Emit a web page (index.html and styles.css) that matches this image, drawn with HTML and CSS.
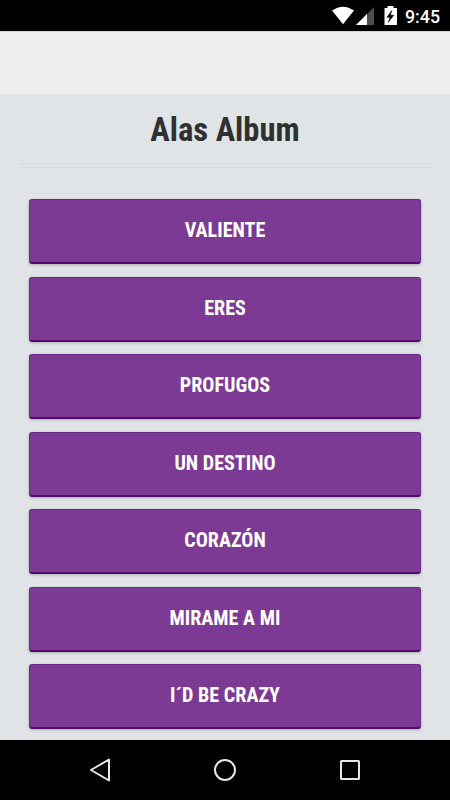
FILE: index.html
```html
<!DOCTYPE html>
<html lang="es">
<head>
<meta charset="utf-8">
<meta name="viewport" content="width=device-width, initial-scale=1">
<title>Alas Album</title>
<link rel="stylesheet" href="styles.css">
</head>
<body>
<div class="statusbar">
	<svg class="status-icons" width="80" height="31" viewBox="0 0 80 31">
		<path d="M2 10.500Q13 2.800 24 10.500L13 24.300Z" fill="#fff"/>
		<path d="M44 7V25H26Z" fill="#4d4d4d"/>
		<path d="M37 14V25H26Z" fill="#fff"/>
		<path d="M57.500 6h6v2h3.500v17h-12.500v-17h3z" fill="#fff"/>
		<path d="M61.800 10.500L57 17.300h3.200L58.200 22.300L63.700 15.300h-3.400z" fill="#000" stroke="#000" stroke-width=".6"/>
	</svg>
	<span class="clock">9:45</span>
</div>
<div class="header"></div>
<div class="content">
	<h1>Alas Album</h1>
	<div class="divider"></div>
	<div class="songs">
		<button class="btn">Valiente</button>
		<button class="btn">Eres</button>
		<button class="btn">Profugos</button>
		<button class="btn">Un Destino</button>
		<button class="btn">Corazón</button>
		<button class="btn">Mirame a mi</button>
		<button class="btn">I´d be crazy</button>
	</div>
</div>
<div class="navbar">
	<svg width="24" height="26" viewBox="0 0 24 26"><path d="M21 2.500V23.500L3 13Z"/></svg>
	<svg width="24" height="26" viewBox="0 0 24 26"><circle cx="12" cy="13" r="10"/></svg>
	<svg width="24" height="26" viewBox="0 0 24 26"><rect x="3" y="4" width="18" height="18" rx=".5"/></svg>
</div>
</body>
</html>
```

FILE: styles.css
```css
* {
	box-sizing: border-box;
}
body {
	margin: 0;
	height: 800px;
	display: flex;
	flex-direction: column;
	overflow: hidden;
	background-color: #e0e4e7;
	font-family: "Roboto Condensed", Roboto, sans-serif;
	font-stretch: 75%;
}
.statusbar {
	height: 31px;
	flex: none;
	display: flex;
	justify-content: flex-end;
	align-items: center;
	padding-right: 10px;
	background-color: #000;
	color: #fff;
}
.status-icons {
	margin-right: -11px;
}
.clock {
	width: 41px;
	text-align: right;
	font-family: Roboto, sans-serif;
	font-stretch: normal;
	font-size: 17.8px;
	font-weight: 500;
	line-height: 31px;
	padding-top: 1px;
}
.header {
	height: 63px;
	flex: none;
	background-color: #ededed;
	border-top: 1px solid #d4d4d4;
}
.content {
	flex: 1;
	min-height: 0;
	padding: 16px 18.5px 0;
}
h1 {
	margin: 0;
	font-size: 32.6px;
	line-height: 40px;
	font-weight: 700;
	text-align: center;
	color: #303030;
}
.divider {
	height: 5px;
	margin: 13px 0 31px;
	border-top: 1px solid #d9dbdc;
	border-bottom: 1px solid #d9dbdc;
}
.songs {
	display: flex;
	flex-direction: column;
	gap: 12.5px;
	padding: 0 10.5px;
}
.btn {
	height: 65px;
	padding: 0 0 2px;
	border: 1px solid #6d2586;
	border-bottom: 2px solid #530b6a;
	border-radius: 3px;
	background-color: #7d3a94;
	box-shadow: 0 1px 3px rgba(0, 0, 0, .25);
	color: #fff;
	font: inherit;
	font-size: 20.1px;
	font-weight: 700;
	text-transform: uppercase;
}
.navbar {
	height: 60px;
	flex: none;
	display: flex;
	justify-content: center;
	align-items: center;
	gap: 101px;
	background-color: #000;
}
.navbar svg {
	fill: none;
	stroke: #e6e6e6;
	stroke-width: 2;
	stroke-linejoin: round;
}
```
